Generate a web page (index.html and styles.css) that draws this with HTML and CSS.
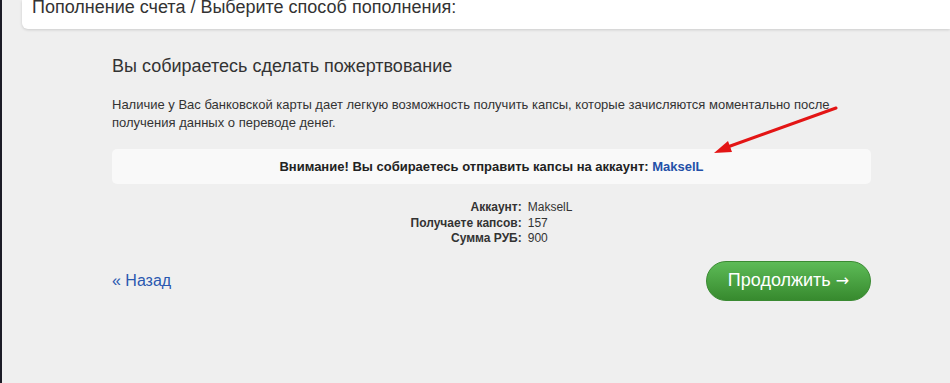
FILE: index.html
```html
<!DOCTYPE html>
<html lang="ru">
<head>
    <meta charset="UTF-8">
    <title>Пополнение счета</title>
    <link rel="stylesheet" href="styles.css">
</head>
<body>
    <div class="sidebar"></div>
    <div class="main">
        <div class="page-head">Пополнение счета / Выберите способ пополнения:</div>

        <div class="content">
            <h2>Вы собираетесь сделать пожертвование</h2>
            <p class="intro">Наличие у Вас банковской карты дает легкую возможность получить капсы, которые зачисляются моментально после получения данных о переводе денег.</p>

            <div class="notice">Внимание! Вы собираетесь отправить капсы на аккаунт: <span class="nick">MakselL</span></div>

            <table class="summary">
                <tr><th>Аккаунт:</th><td>MakselL</td></tr>
                <tr><th>Получаете капсов:</th><td>157</td></tr>
                <tr><th>Сумма РУБ:</th><td>900</td></tr>
            </table>

            <div class="actions">
                <a href="#" class="back">« Назад</a>
                <button class="btn-next">Продолжить <span class="arr">→</span></button>
            </div>
        </div>
    </div>

    <svg class="arrow" width="140" height="60" viewBox="0 0 140 60">
        <line x1="130" y1="6" x2="16" y2="47" stroke="#e31515" stroke-width="3" stroke-linecap="round"/>
        <polygon points="8,51 22,39 26,50" fill="#e31515"/>
    </svg>
</body>
</html>
```

FILE: styles.css
```css
body {
    margin: 0;
    font-family: "Liberation Sans", Arial, sans-serif;
    background-color: #efefef;
    color: #333;
    display: flex;
    height: 383px;
    overflow: hidden;
}
.sidebar {
    width: 2px;
    background-color: #1b1b26;
    flex-shrink: 0;
}
.main {
    flex: 1;
    padding-left: 20px;
}
.page-head {
    background-color: #ffffff;
    height: 29px;
    padding: 0 10px;
    box-sizing: border-box;
    font-size: 18px;
    line-height: 15px;
    color: #333;
    border-bottom-left-radius: 6px;
    box-shadow: 0 1px 3px rgba(0, 0, 0, 0.15);
}
.content {
    width: 759px;
    margin-left: 90px;
}
h2 {
    font-size: 18px;
    font-weight: normal;
    color: #333;
    margin: 26px 0 0;
    line-height: 22px;
}
.intro {
    font-size: 13px;
    line-height: 18px;
    margin: 19px 0 0;
    color: #333;
}
.notice {
    margin-top: 17px;
    background-color: #f9f9f9;
    border-radius: 5px;
    height: 35px;
    line-height: 35px;
    text-align: center;
    font-size: 13px;
    font-weight: bold;
    color: #222;
}
.nick {
    color: #2350a8;
}
.summary {
    margin: 16px auto 0;
    border-collapse: collapse;
    font-size: 12px;
    color: #333;
}
.summary th {
    text-align: right;
    padding: 0 3px 0 0;
    line-height: 15.5px;
}
.summary td {
    text-align: left;
    padding: 0 0 0 3px;
    line-height: 15.5px;
}
.actions {
    display: flex;
    justify-content: space-between;
    align-items: center;
    margin-top: 14px;
}
.back {
    font-size: 16px;
    color: #2a58b0;
    text-decoration: none;
}
.btn-next {
    width: 165px;
    height: 40px;
    border: 1px solid #3a8a32;
    border-radius: 20px;
    background: linear-gradient(#5dbb57, #378a2e);
    color: #fff;
    font-family: "Liberation Sans", Arial, sans-serif;
    font-size: 18px;
    padding: 0;
    cursor: pointer;
}
.arr {
    font-family: "DejaVu Sans", sans-serif;
    font-size: 16px;
}
.arrow {
    position: absolute;
    left: 706px;
    top: 102px;
}
```
